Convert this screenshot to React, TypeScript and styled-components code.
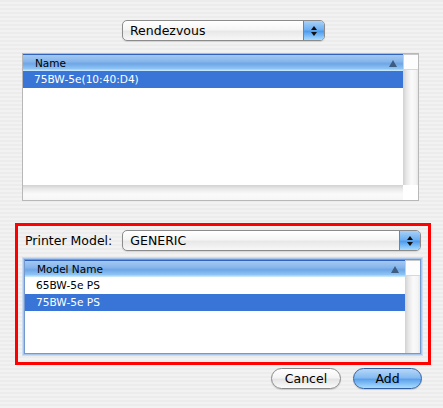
import React from 'react';
import styled, { createGlobalStyle, css } from 'styled-components';

const GlobalStyle = createGlobalStyle`
    html, body {
        margin: 0;
        padding: 0;
    }
    body {
        width: 443px;
        height: 408px;
        overflow: hidden;
        font-family: "DejaVu Sans", "Liberation Sans", sans-serif;
        background: repeating-linear-gradient(
            to bottom,
            #ececec 0px,
            #ececec 2px,
            #f2f2f2 2px,
            #f2f2f2 4px
        );
    }
`;

const Page = styled.div`
    display: flex;
    flex-direction: column;
    padding-top: 20px;
    height: 408px;
    box-sizing: border-box;
`;

const TopRow = styled.div`
    display: flex;
    padding-left: 122px;
    margin-bottom: 12px;
`;

const PopUp = styled.div<{ $width?: number }>`
    display: flex;
    align-items: stretch;
    height: 21px;
    box-sizing: border-box;
    ${(p) => (p.$width ? css`width: ${p.$width}px;` : css`flex: 1;`)}
    border: 1px solid #8b8b8b;
    border-radius: 5px;
    background: linear-gradient(
        to bottom,
        #ffffff 0%,
        #f5f5f5 45%,
        #e8e8e8 55%,
        #f7f7f7 100%
    );
    box-shadow: 0 1px 1px rgba(0, 0, 0, 0.12);
    overflow: hidden;
`;

const PopUpText = styled.span`
    flex: 1;
    padding-left: 7px;
    font-size: 12.5px;
    line-height: 19px;
    color: #000;
`;

const PopUpArrows = styled.span`
    width: 20px;
    display: flex;
    flex-direction: column;
    align-items: center;
    justify-content: center;
    gap: 2px;
    border-left: 1px solid #6283bb;
    background: linear-gradient(
        to bottom,
        #a9d0f7 0%,
        #6eb0f2 45%,
        #4e9cee 55%,
        #a8dcff 100%
    );
`;

const Tri = styled.span<{ $down?: boolean }>`
    width: 0;
    height: 0;
    border-left: 3px solid transparent;
    border-right: 3px solid transparent;
    ${(p) =>
        p.$down
            ? css`border-top: 4px solid #111;`
            : css`border-bottom: 4px solid #111;`}
`;

const TableFrame = styled.div<{ $focused?: boolean; $hscroll?: boolean }>`
    display: grid;
    grid-template-columns: 1fr 15px;
    grid-template-rows: ${(p) => (p.$hscroll ? '1fr 15px' : '1fr')};
    box-sizing: border-box;
    background: #fff;
    ${(p) =>
        p.$focused
            ? css`
                  border: 1px solid #7299d0;
                  box-shadow: 0 0 0 1px #a9c6ea, 0 0 0 2px #c9dcf3;
              `
            : css`
                  border: 1px solid #b8b8b8;
              `}
`;

const TableMain = styled.div`
    display: flex;
    flex-direction: column;
    min-width: 0;
`;

const HeaderRow = styled.div`
    display: flex;
    align-items: center;
    height: 16px;
    padding: 0 6px 0 12px;
    font-size: 10.5px;
    color: #000;
    border-top: 1px solid #2f63bd;
    background: linear-gradient(
        to bottom,
        #a5c8f0 0%,
        #86b6ec 40%,
        #6ea6e6 55%,
        #8ec4f4 85%,
        #d2f0ff 100%
    );
`;

const HeaderLabel = styled.span`
    flex: 1;
`;

const SortArrow = styled.span`
    width: 0;
    height: 0;
    border-left: 4px solid transparent;
    border-right: 4px solid transparent;
    border-bottom: 7px solid #3f5d80;
`;

const Row = styled.div<{ $selected?: boolean }>`
    height: 17px;
    line-height: 17px;
    padding-left: 11px;
    font-size: 10.6px;
    white-space: nowrap;
    color: ${(p) => (p.$selected ? '#fff' : '#000')};
    background: ${(p) => (p.$selected ? '#3875d7' : '#fff')};
`;

const VScroll = styled.div`
    display: flex;
    flex-direction: column;
`;

const ScrollCorner = styled.div`
    height: 16px;
    box-sizing: border-box;
    border-top: 1px solid #c8c8c8;
    border-left: 1px solid #d0d0d0;
    border-bottom: 1px solid #d8d8d8;
    background: #fdfdfd;
`;

const VTrack = styled.div`
    flex: 1;
    background: linear-gradient(
        to right,
        #d2d2d2 0%,
        #e8e8e8 25%,
        #fafafa 55%,
        #f4f4f4 85%,
        #e6e6e6 100%
    );
`;

const HTrack = styled.div`
    background: linear-gradient(
        to bottom,
        #d2d2d2 0%,
        #e8e8e8 25%,
        #fafafa 60%,
        #f6f6f6 100%
    );
`;

const EmptyCorner = styled.div`
    background: #fff;
`;

const Highlight = styled.div`
    margin: 22px 0 0 15px;
    width: 416px;
    height: 142px;
    box-sizing: border-box;
    border: 3px solid #ff0000;
    padding: 4px 7px 8px 7px;
    display: flex;
    flex-direction: column;
`;

const ModelRow = styled.div`
    display: flex;
    align-items: center;
    gap: 10px;
    margin-bottom: 8px;
`;

const Label = styled.span`
    font-size: 12.5px;
    color: #000;
`;

const ButtonRow = styled.div`
    display: flex;
    justify-content: flex-end;
    gap: 12px;
    padding: 3px 21px 0 0;
`;

const PushButton = styled.button<{ $default?: boolean }>`
    height: 21px;
    box-sizing: border-box;
    border-radius: 11px;
    font-family: inherit;
    font-size: 12.5px;
    color: #000;
    padding: 0;
    display: flex;
    align-items: center;
    justify-content: center;
    box-shadow: 0 1px 1px rgba(0, 0, 0, 0.15);
    ${(p) =>
        p.$default
            ? css`
                  width: 69px;
                  border: 1px solid #35609f;
                  background: linear-gradient(
                      to bottom,
                      #b6d7f8 0%,
                      #86bbf1 45%,
                      #5ea2ec 55%,
                      #a9ddff 100%
                  );
              `
            : css`
                  width: 70px;
                  border: 1px solid #8a8a8a;
                  background: linear-gradient(
                      to bottom,
                      #ffffff 0%,
                      #f4f4f4 45%,
                      #e4e4e4 55%,
                      #fbfbfb 100%
                  );
              `}
`;

interface TableProps {
    header: string;
    rows: { label: string; selected?: boolean }[];
    focused?: boolean;
    hscroll?: boolean;
}

const ListTable: React.FC<TableProps> = ({ header, rows, focused, hscroll }) => (
    <TableFrame $focused={focused} $hscroll={hscroll}>
        <TableMain>
            <HeaderRow>
                <HeaderLabel>{header}</HeaderLabel>
                <SortArrow />
            </HeaderRow>
            {rows.map((r) => (
                <Row key={r.label} $selected={r.selected}>
                    {r.label}
                </Row>
            ))}
        </TableMain>
        <VScroll>
            <ScrollCorner />
            <VTrack />
        </VScroll>
        {hscroll && (
            <>
                <HTrack />
                <EmptyCorner />
            </>
        )}
    </TableFrame>
);

const TableWrap = styled.div<{ $height: number; $inset?: boolean }>`
    margin-left: ${(p) => (p.$inset ? '-1px' : '22px')};
    width: 397px;
    height: ${(p) => p.$height}px;
    display: flex;
    flex-direction: column;
    & > * {
        flex: 1;
    }
`;

export default function App() {
    return (
        <>
            <GlobalStyle />
            <Page>
                <TopRow>
                    <PopUp $width={203}>
                        <PopUpText>Rendezvous</PopUpText>
                        <PopUpArrows>
                            <Tri />
                            <Tri $down />
                        </PopUpArrows>
                    </PopUp>
                </TopRow>
                <TableWrap $height={148}>
                    <ListTable
                        header="Name"
                        rows={[{ label: '75BW-5e(10:40:D4)', selected: true }]}
                        hscroll
                    />
                </TableWrap>
                <Highlight>
                    <ModelRow>
                        <Label>Printer Model:</Label>
                        <PopUp>
                            <PopUpText>GENERIC</PopUpText>
                            <PopUpArrows>
                                <Tri />
                                <Tri $down />
                            </PopUpArrows>
                        </PopUp>
                    </ModelRow>
                    <TableWrap $height={95} $inset>
                        <ListTable
                            header="Model Name"
                            rows={[
                                { label: '65BW-5e PS' },
                                { label: '75BW-5e PS', selected: true },
                            ]}
                            focused
                        />
                    </TableWrap>
                </Highlight>
                <ButtonRow>
                    <PushButton>Cancel</PushButton>
                    <PushButton $default>Add</PushButton>
                </ButtonRow>
            </Page>
        </>
    );
}
